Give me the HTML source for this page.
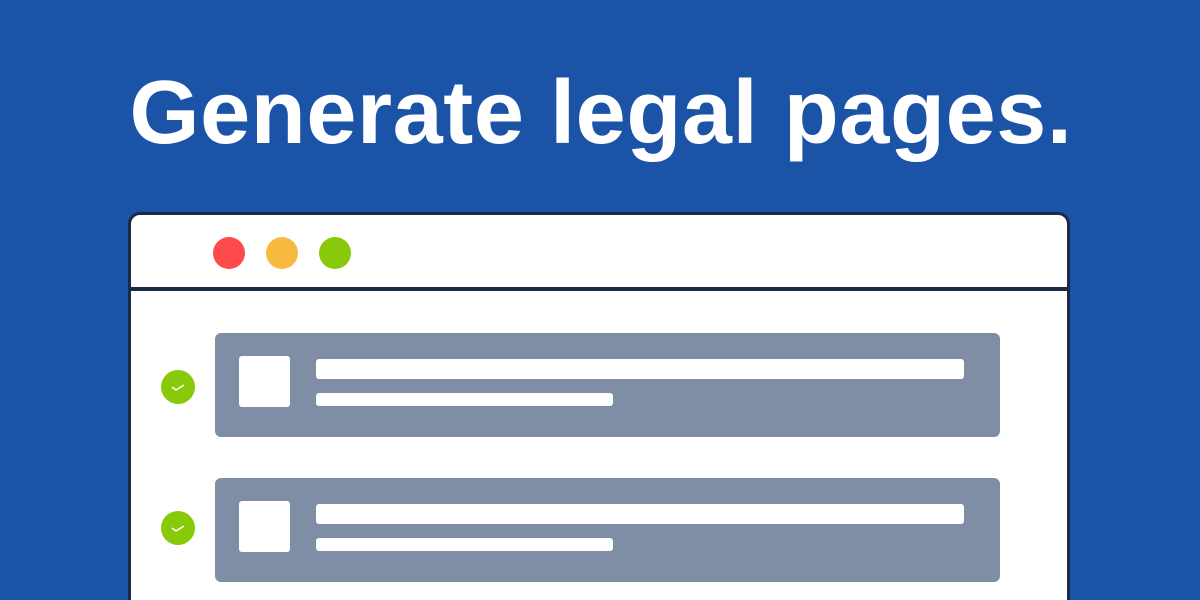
<!DOCTYPE html>
<html style="width:1200px;height:600px;overflow:hidden"><head><style>
*{margin:0;padding:0;box-sizing:border-box}
body{width:1200px;height:600px;background:#1b54a7;position:relative;overflow:hidden;font-family:"Liberation Sans",Arial,sans-serif}
h1{position:absolute;left:0;width:1202px;top:63px;text-align:center;color:#fff;font-size:90px;font-weight:bold;line-height:100px;letter-spacing:0.6px}
.win{position:absolute;left:128px;top:212px;width:942px;height:400px;background:#fff;border:3.5px solid #1a2b47;border-radius:12px}
.hdr{position:absolute;left:0;right:0;top:72px;height:4px;background:#1a2b47}
.dot{position:absolute;top:22px;width:32px;height:32px;border-radius:50%}
.card{position:absolute;left:84px;width:785px;height:104px;background:#808ea5;border-radius:6px}
.sq{position:absolute;left:24px;top:23px;width:51px;height:51px;background:#fff;border-radius:3px}
.l1{position:absolute;left:101px;top:26px;width:648px;height:20px;background:#fff;border-radius:3px}
.l2{position:absolute;left:101px;top:60px;width:297px;height:13px;background:#fff;border-radius:3px}
.chk{position:absolute;left:30px;width:34px;height:34px;border-radius:50%;background:#88c90a}
</style></head><body>
<h1>Generate legal pages.</h1>
<div class="win">
<div class="dot" style="left:82px;background:#fe4a4a"></div>
<div class="dot" style="left:135px;background:#f7b940"></div>
<div class="dot" style="left:188px;background:#88c90a"></div>
<div class="hdr"></div>
<div class="chk" style="top:155px"><svg width="34" height="34"><path d="M11 17l4 3 8-5" stroke="#fff" stroke-width="1.5" fill="none"/></svg></div>
<div class="card" style="top:118px"><div class="sq"></div><div class="l1"></div><div class="l2"></div></div>
<div class="chk" style="top:296px"><svg width="34" height="34"><path d="M11 17l4 3 8-5" stroke="#fff" stroke-width="1.5" fill="none"/></svg></div>
<div class="card" style="top:263px"><div class="sq"></div><div class="l1"></div><div class="l2"></div></div>
</div>
</body></html>
